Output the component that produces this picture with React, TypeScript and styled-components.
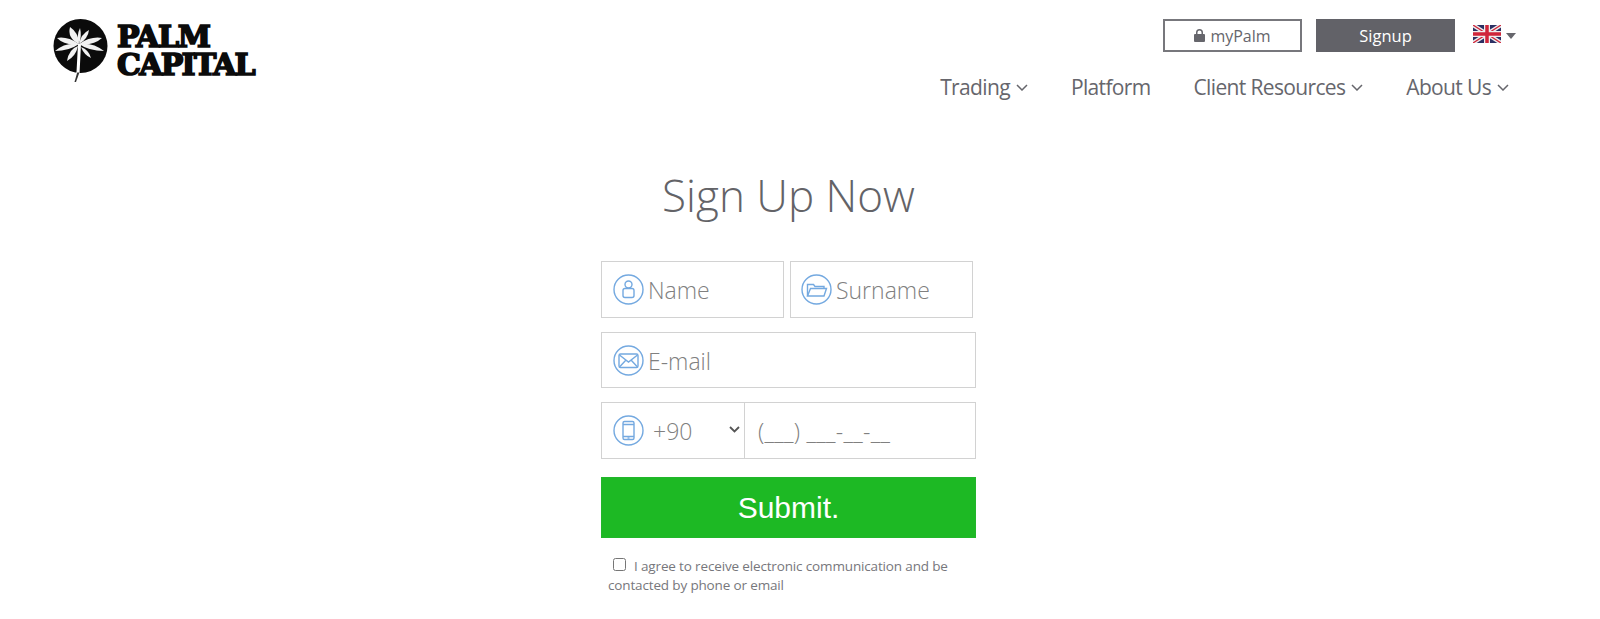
import React, { FC } from 'react';

import styled, { createGlobalStyle } from 'styled-components';

const NAV_ITEMS = [
  { label: 'Trading', hasMenu: true },
  { label: 'Platform', hasMenu: false },
  { label: 'Client Resources', hasMenu: true },
  { label: 'About Us', hasMenu: true },
];

const FRONDS = [
  'M80 44 Q68 38 71 27 Q80 33 80 44Z',
  'M80 44 Q77 36 81 28 Q83 36 80 44Z',
  'M80 44 Q82 34 90 30 Q89 39 80 44Z',
  'M80 44 Q68 36 58 38 Q66 46 80 44Z',
  'M80 44 Q92 36 103 38 Q94 46 80 44Z',
  'M80 44 Q66 42 56 51 Q70 51 80 44Z',
  'M80 44 Q94 42 105 51 Q90 51 80 44Z',
  'M79 46 Q70 49 68 61 Q77 56 79 46Z',
  'M82 47 Q85 55 92 58 Q90 50 82 47Z',
];

const Chevron: FC = () => (
  <svg width="12" height="7" viewBox="0 0 12 7" fill="none" stroke="#66666c" strokeWidth="1.5">
    <path d="M1 1l5 5 5-5" />
  </svg>
);

const PalmLogo: FC = () => (
  <svg width="64" height="72" viewBox="50 15 64 72">
    <circle cx="81.5" cy="46" r="27" fill="#0b0b0b" />
    <path d="M79 44h3l-1.500 30L77 82h-1.500l2-10Z" fill="#fff" />
    <path d="M78.200 72.500h2.200L77 82h-1.500Z" fill="#333" />
    {FRONDS.map((d) => (
      <path key={d} d={d} fill="#f2f2f2" />
    ))}
  </svg>
);

const LockIcon: FC = () => (
  <svg width="11" height="13" viewBox="0 0 11 13" fill="#66666c">
    <path d="M2 5V3.500a3.500 3.500 0 0 1 7 0V5h1a1 1 0 0 1 1 1v6a1 1 0 0 1-1 1H1a1 1 0 0 1-1-1V6a1 1 0 0 1 1-1Zm1.500 0h4V3.500a2 2 0 0 0-4 0Z" />
  </svg>
);

const UkFlag: FC = () => (
  <svg width="28" height="18" viewBox="0 0 28 18">
    <rect width="28" height="18" fill="#2b2f63" />
    <path d="M0 0l28 18M28 0L0 18" stroke="#eee" strokeWidth="4" />
    <path d="M0 0l28 18M28 0L0 18" stroke="#d0253a" strokeWidth="1.300" />
    <path d="M14 0v18M0 9h28" stroke="#eee" strokeWidth="6" />
    <path d="M14 0v18M0 9h28" stroke="#d0253a" strokeWidth="3.500" />
  </svg>
);

const FieldIcon: FC<{ children: React.ReactNode }> = ({ children }) => (
  <IconSvg width="31" height="31" viewBox="0 0 31 31" fill="none" stroke="#74a9e0" strokeWidth="1.400">
    <circle cx="15.500" cy="15.500" r="14.500" />
    {children}
  </IconSvg>
);

const App: FC = () => (
  <>
    <GlobalStyle />
    <Header>
      <Logo>
        <PalmLogo />
        <LogoText>
          <span>PALM</span>
          <span>CAPITAL</span>
        </LogoText>
      </Logo>
      <HeaderRight>
        <Actions>
          <LoginButton>
            <LockIcon />
            myPalm
          </LoginButton>
          <SignupButton>Signup</SignupButton>
          <Language>
            <UkFlag />
            <Caret />
          </Language>
        </Actions>
        <Nav>
          {NAV_ITEMS.map(({ label, hasMenu }) => (
            <NavItem key={label}>
              {label}
              {hasMenu && <Chevron />}
            </NavItem>
          ))}
        </Nav>
      </HeaderRight>
    </Header>
    <Main>
      <Title>Sign Up Now</Title>
      <Form>
        <NameRow>
          <Field>
            <FieldIcon>
              <circle cx="15.500" cy="10.500" r="3.500" />
              <path d="M10 16.500a2 2 0 0 1 2-2h7a2 2 0 0 1 2 2v5a2 2 0 0 1-2 2h-7a2 2 0 0 1-2-2Z" />
            </FieldIcon>
            <TextInput placeholder="Name" />
          </Field>
          <Field $inset={10}>
            <FieldIcon>
              <path d="M6.500 22V10.500h6l1.500 2h9v2" />
              <path d="M6.500 22l3-7.500h16L23 22Z" />
            </FieldIcon>
            <TextInput placeholder="Surname" />
          </Field>
        </NameRow>
        <EmailField>
          <FieldIcon>
            <rect x="6" y="9" width="19" height="13.500" rx="1.500" />
            <path d="M6.500 10l9 7 9-7M6.500 22l6.500-7M24.500 22L18 15" />
          </FieldIcon>
          <TextInput placeholder="E-mail" />
        </EmailField>
        <Field>
          <FieldIcon>
            <rect x="10" y="6.500" width="11" height="18" rx="1.500" />
            <path d="M10 9.500h11M10 21.500h11" />
            <path d="M14.500 23h2" />
          </FieldIcon>
          <CodeSelect>
            <span>+90</span>
            <svg width="11" height="7" viewBox="0 0 11 7" fill="none" stroke="#555" strokeWidth="1.800">
              <path d="M1 1l4.500 4.500L10 1" />
            </svg>
          </CodeSelect>
          <PhoneInput $gap={13} placeholder="(___) ___-__-__" />
        </Field>
        <SubmitButton type="button">Submit.</SubmitButton>
        <Consent>
          <ConsentBox type="checkbox" />I agree to receive electronic communication and be contacted by phone or email
        </Consent>
      </Form>
    </Main>
  </>
);

const GlobalStyle = createGlobalStyle`
  html, body {
    margin: 0;
    background: #fff;
    font-family: "Open Sans", "Liberation Sans", sans-serif;
    color: #636367;
  }
`;

const Header = styled.header`
  display: flex;
  justify-content: space-between;
  padding: 19px 84px 0 49px;
`;

const Logo = styled.div`
  display: flex;
  align-items: flex-start;
  height: 68px;
  margin-top: -4px;
`;

const LogoText = styled.div`
  display: flex;
  flex-direction: column;
  margin: 8px 0 0 4px;
  font-family: "DejaVu Serif", serif;
  font-weight: 700;
  font-size: 30px;
  line-height: 28px;
  letter-spacing: -1.300px;
  color: #0b0b0b;
  -webkit-text-stroke: 1.700px #0b0b0b;

  span:last-child {
    letter-spacing: -1.700px;
  }
`;

const HeaderRight = styled.div`
  display: flex;
  flex-direction: column;
  align-items: flex-end;
`;

const Actions = styled.div`
  display: flex;
  align-items: flex-start;
`;

const LoginButton = styled.a`
  display: flex;
  align-items: center;
  justify-content: center;
  gap: 5px;
  box-sizing: border-box;
  width: 139px;
  height: 33px;
  margin-right: 14px;
  border: 2px solid #77777c;
  font-size: 16px;
  color: #66666c;
`;

const SignupButton = styled.a`
  display: flex;
  align-items: center;
  justify-content: center;
  width: 139px;
  height: 33px;
  margin-right: 18px;
  background: #626268;
  font-size: 16.500px;
  font-weight: 500;
  color: #fff;
`;

const Language = styled.div`
  display: flex;
  align-items: center;
  gap: 5px;
  margin-top: 6px;
`;

const Caret = styled.span`
  width: 0;
  height: 0;
  margin-top: 3px;
  border-left: 5.500px solid transparent;
  border-right: 5.500px solid transparent;
  border-top: 6px solid #66666c;
`;

const Nav = styled.nav`
  display: flex;
  gap: 43px;
  margin: 18px 7px 0 0;
`;

const NavItem = styled.a`
  display: flex;
  align-items: center;
  gap: 6px;
  font-size: 21px;
  line-height: 34px;
  letter-spacing: -0.650px;
  color: #66666c;
`;

const Main = styled.main`
  display: flex;
  flex-direction: column;
  align-items: center;
  padding-right: 23px;
`;

const Title = styled.h1`
  margin: 61px 0 0;
  font-size: 44px;
  line-height: 60px;
  font-weight: 300;
  color: #636367;
`;

const Form = styled.form`
  display: flex;
  flex-direction: column;
  gap: 14px;
  width: 375px;
  margin-top: 36px;
`;

const NameRow = styled.div`
  display: grid;
  grid-template-columns: 1fr 1fr;
  gap: 6px;
  width: 372px;
`;

const Field = styled.div<{ $inset?: number }>`
  display: flex;
  align-items: center;
  box-sizing: border-box;
  min-width: 0;
  height: 57px;
  flex: none;
  padding-left: ${({ $inset = 11 }) => $inset}px;
  border: 1px solid #d2d2d2;
`;

const EmailField = styled(Field)`
  height: 56px;
`;

const IconSvg = styled.svg`
  flex: none;
`;

const TextInput = styled.input<{ $gap?: number }>`
  flex: 1;
  min-width: 0;
  margin-left: ${({ $gap = 4 }) => $gap}px;
  padding: 1px 0 0;
  border: 0;
  outline: 0;
  font-family: inherit;
  font-size: 23px;
  font-weight: 300;
  color: #808080;

  &::placeholder {
    color: #808080;
    opacity: 1;
  }
`;

const CodeSelect = styled.div`
  display: flex;
  align-items: center;
  justify-content: space-between;
  box-sizing: border-box;
  width: 101px;
  height: 100%;
  padding: 1px 4px 0 9px;
  border-right: 1px solid #d2d2d2;
  font-size: 23px;
  font-weight: 300;
  color: #808080;

  svg {
    margin-bottom: 4px;
  }
`;

const PhoneInput = styled(TextInput)`
  letter-spacing: 0.300px;
`;

const SubmitButton = styled.button`
  height: 61px;
  margin-top: 4px;
  padding: 0;
  border: 1px solid #22b62b;
  background: #1db924;
  font-family: "Liberation Sans", Arial, sans-serif;
  font-size: 30px;
  color: #fff;
`;

const Consent = styled.label`
  display: block;
  margin-top: 5px;
  padding: 0 10px 0 7px;
  font-size: 13.500px;
  line-height: 19px;
  letter-spacing: -0.150px;
  color: #77777c;
`;

const ConsentBox = styled.input`
  width: 13px;
  height: 13px;
  margin: 0 8px 0 5px;
`;

export default App;
